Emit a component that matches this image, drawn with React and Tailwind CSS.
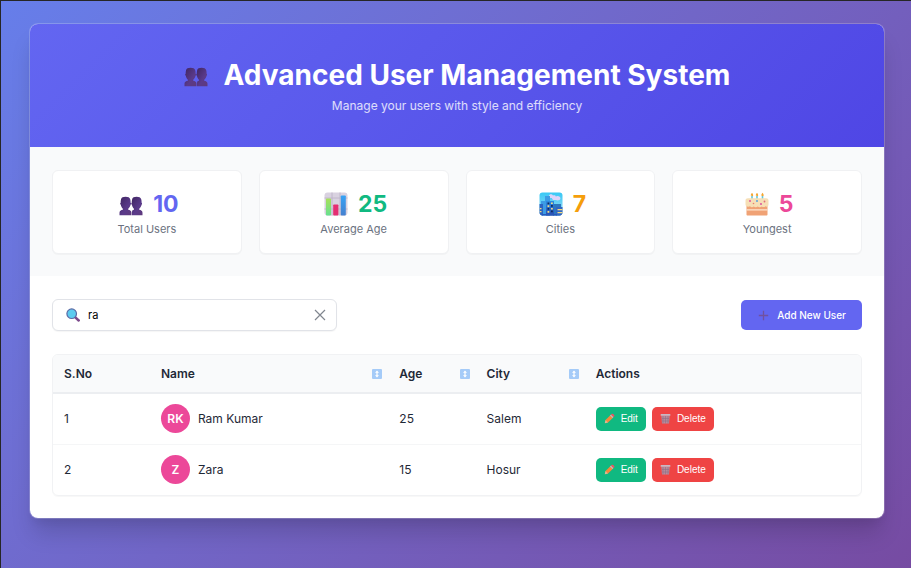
import { useState } from "react";

function PeopleIcon({ className }) {
  return (
    <svg viewBox="0 0 24 20" className={className} aria-hidden="true">
      <defs>
        <linearGradient id="people" x1="0" y1="0" x2="1" y2="1">
          <stop offset="0" stopColor="#3f2560" />
          <stop offset="0.6" stopColor="#5a3a8a" />
          <stop offset="1" stopColor="#5f3a7c" />
        </linearGradient>
      </defs>
      <g fill="url(#people)">
        <path d="M2 3.400C2.400 1.400 4.200.8 6.600.8s4.300.6 4.700 2.800c.3 1.400.3 2 .3 3.200.7.1.6 1.800 0 2-.5 1.800-1.300 3.200-2.400 3.900v1c1.900.4 3.300 1 3.300 3V19.200H.5v-2.500c0-2 1.400-2.600 3.400-3v-1C2.800 11.900 2.200 10.600 1.800 8.800c-.8-.3-.8-1.900-.1-2 0-1.200 0-2 .3-3.400z" />
        <path d="M13.100 3.400C13.500 1.400 15.300.8 17.600.8s4.300.6 4.700 2.800c.3 1.400.3 2 .3 3.200.7.1.6 1.800 0 2-.5 1.800-1.300 3.200-2.400 3.900v1c1.900.4 3.300 1 3.300 3V19.200H13v-2.500c0-2 0-2.600 2-3v-1c-1.100-.8-1.700-2.100-2.100-3.900-.8-.3-.8-1.900-.1-2 0-1.200 0-2 .3-3.400z" />
      </g>
    </svg>
  );
}

function ChartIcon({ className }) {
  return (
    <svg viewBox="0 0 24 24" className={className} aria-hidden="true">
      <defs>
        <linearGradient id="barGreen" x1="0" y1="0" x2="0" y2="1">
          <stop offset="0" stopColor="#a8e05a" />
          <stop offset="1" stopColor="#66e090" />
        </linearGradient>
        <linearGradient id="barBlue" x1="0" y1="0" x2="0" y2="1">
          <stop offset="0" stopColor="#36a3f5" />
          <stop offset="1" stopColor="#4580cf" />
        </linearGradient>
      </defs>
      <rect x="0.500" y="0.500" width="23" height="23" rx="3" fill="#d9d2e0" />
      <path d="M8 .5v23M16 .5v23M.5 6h23M.5 17h23" stroke="#bdb4c8" strokeWidth="0.900" />
      <rect x="2" y="6.500" width="5" height="17" rx="0.800" fill="url(#barGreen)" />
      <rect x="9.200" y="12.500" width="5.200" height="11" rx="0.800" fill="#e52e72" />
      <rect x="16.800" y="3.500" width="5" height="20" rx="0.800" fill="url(#barBlue)" />
    </svg>
  );
}

function CityIcon({ className }) {
  return (
    <svg viewBox="0 0 24 24" className={className} aria-hidden="true">
      <defs>
        <linearGradient id="sky" x1="0" y1="0" x2="0" y2="1">
          <stop offset="0" stopColor="#35c8f5" />
          <stop offset="1" stopColor="#a5dcf5" />
        </linearGradient>
        <linearGradient id="tower" x1="0" y1="0" x2="0" y2="1">
          <stop offset="0" stopColor="#2c8ce0" />
          <stop offset="1" stopColor="#2848ae" />
        </linearGradient>
        <clipPath id="cityClip">
          <rect x="0.500" y="0.500" width="23" height="23" rx="3" />
        </clipPath>
      </defs>
      <g clipPath="url(#cityClip)">
        <path d="M0 0h24v24H0z" fill="url(#sky)" />
        <path d="M10 4c0-2 3-2.500 4-.5 1.500-.5 2.500 0 2.800 1 2-1.500 4.800 0 4.600 2 0 2-3 2.500-5 1.500-2 .5-3.500-.8-3.400-2C11.500 6.300 10 5.500 10 4z" fill="#ddd2fa" />
        <path d="M2 9h4V4h5v20H2z" fill="#3b9be5" />
        <path d="M14 12h8v12h-8z" fill="#2b77bf" />
        <path d="M7 9h8v15H7z" fill="url(#tower)" />
        <path d="M0 12h4v12H0z" fill="#2d64c0" />
        <path d="M17 15h7v9h-7z" fill="#3066c4" />
        <path d="M3 22h15v2H3z" fill="#2858b8" />
        <path d="M8.500 10.500h1.800v1.800H8.500zM8.500 16h1.800v1.800H8.500zM12 13h1.800v1.800H12zM12 18.500h1.800v1.800H12z" fill="#102a5c" />
        <path d="M8.500 13.300h1.800v1.600H8.500zM8.500 19h1.800v1.800H8.500zM12 10.500h1.800v1.600H12zM12 16h1.800v1.600H12zM18.500 17H24v1.300h-5.500zM18.500 20H24v1.300h-5.500zM.5 16h2v1.300h-2zM.5 19h2v1.300h-2z" fill="#f2dc82" />
      </g>
    </svg>
  );
}

function CakeIcon({ className }) {
  return (
    <svg viewBox="0 0 24 24" className={className} aria-hidden="true">
      <path d="M6.200 4h1.600v4H6.200zM11.200 4h1.600v4h-1.600zM16.700 4h1.600v4h-1.600z" fill="#62c8dc" />
      <path d="M7 .8c.9 1.200 1.200 1.800 1.200 2.300 0 .8-.5 1.200-1.200 1.200s-1.200-.4-1.200-1.200C5.800 2.600 6.200 2 7 .8zM12 .8c.9 1.200 1.200 1.800 1.200 2.300 0 .8-.5 1.200-1.200 1.200s-1.200-.4-1.200-1.200c0-.5.4-1.100 1.200-2.300zM17.500 .8c.9 1.200 1.200 1.800 1.200 2.300 0 .8-.5 1.200-1.200 1.200s-1.200-.4-1.200-1.200c0-.5.4-1.100 1.200-2.300z" fill="#f5a52e" />
      <path d="M1.500 12h21v10.500c0 .8-.5 1-1 1h-19c-.5 0-1-.2-1-1z" fill="#f0a275" />
      <path d="M1.500 17.200h21v1.400h-21z" fill="#fde6d0" />
      <path d="M.5 8.500C.5 7 1.500 6.300 3 6.300h18c1.500 0 2.500.7 2.500 2.200v4c0 2.300-2.200 2.600-3 1.700-.8 1-2.800 1.200-3.600.3-1 1-3.300 1-4.200 0-1 1-3 1-4 0-1 1-2.800 1-3.600-.3-1.100.8-4.600.800-4.600-1.700z" fill="#f6dfb6" />
      <circle cx="5" cy="9" r="0.900" fill="#e0489a" />
      <circle cx="8.500" cy="11.500" r="0.800" fill="#e8806a" />
      <circle cx="12" cy="9" r="0.900" fill="#4a9be0" />
      <circle cx="16" cy="12" r="0.900" fill="#d8449a" />
      <circle cx="19.500" cy="9.500" r="0.900" fill="#e06a7a" />
    </svg>
  );
}

function SearchIcon({ className }) {
  return (
    <svg viewBox="0 0 14 14" className={className} aria-hidden="true">
      <path d="M9.300 9.300l3.400 3.200" stroke="#7d4a8c" strokeWidth="2.500" strokeLinecap="round" />
      <circle cx="5.700" cy="5.700" r="4.800" fill="#5ccbef" stroke="#5a6aa5" strokeWidth="1.200" />
    </svg>
  );
}

function SortIcon() {
  return (
    <svg viewBox="0 0 10 10" className="size-[10px] shrink-0" aria-hidden="true">
      <rect width="10" height="10" rx="1" fill="#a5cbf8" />
      <path d="M5 1.500L7 3.700H5.600v2.600H7L5 8.500 3 6.300h1.400V3.700H3z" fill="#fff" />
    </svg>
  );
}

function PencilIcon() {
  return (
    <svg viewBox="0 0 11 11" className="size-[11px]" aria-hidden="true">
      <path d="M.8 10.300l.7-3.200L6.600 1.900l2.600 2.500-5.200 5.200z" fill="#f58a3c" />
      <path d="M1.500 7.100l2.500 2.500-3.200.700z" fill="#d9b89a" />
      <path d="M6 2.600l1-1 2.500 2.500-1 1z" fill="#b9bfc4" />
      <path d="M7 1.600l.8-.8c1-.8 3.300 1.400 2.500 2.500l-.8.800z" fill="#f4525e" />
    </svg>
  );
}

function TrashIcon() {
  return (
    <svg viewBox="0 0 11 11" className="size-[11px]" aria-hidden="true">
      <path d="M1.300 2.500h8.400l-.7 8H2z" fill="#b98b9b" />
      <path d="M3 3v7.500M5.500 3v7.500M8 3v7.500M2 5.500h7M2 8h7" stroke="#8d7186" strokeWidth="0.600" />
      <rect x="0.600" y="1" width="9.800" height="1.800" rx="0.500" fill="#c9b8c4" />
    </svg>
  );
}

const stats = [
  { Icon: PeopleIcon, value: 10, label: "Total Users", color: "text-[#6366f1]", icon: "h-5 w-6 mt-1" },
  { Icon: ChartIcon, value: 25, label: "Average Age", color: "text-[#10b981]", icon: "size-6" },
  { Icon: CityIcon, value: 7, label: "Cities", color: "text-[#f59e0b]", icon: "size-6" },
  { Icon: CakeIcon, value: 5, label: "Youngest", color: "text-[#ec4899]", icon: "size-6" },
];

const users = [
  { initials: "RK", name: "Ram Kumar", age: 25, city: "Salem" },
  { initials: "Z", name: "Zara", age: 15, city: "Hosur" },
];

const columns = [
  { title: "S.No", width: "w-[12%]", sortable: false },
  { title: "Name", width: "w-[29.500%]", sortable: true },
  { title: "Age", width: "w-[10.800%]", sortable: true },
  { title: "City", width: "w-[13.500%]", sortable: true },
  { title: "Actions", width: "", sortable: false },
];

export default function App() {
  const [query, setQuery] = useState("ra");
  return (
    <div className="min-h-screen border-t border-l border-[#262626] bg-linear-135 from-[#667eea] to-[#764ba2] px-[28px] pt-[22px] pb-[49px] pr-[26px] font-['Inter',sans-serif] text-[#1f2937]">
      <main className="overflow-hidden rounded-[9px] border border-white/20 bg-white bg-clip-padding shadow-[0_18px_22px_-4px_rgba(0,0,0,0.15),0_7px_8px_-4px_rgba(0,0,0,0.06)]">
        <header className="bg-linear-135 from-[#6366f1] to-[#4f46e5] px-6 pt-[33px] pb-[33px] text-center text-white">
          <h1 className="flex items-center justify-center gap-4 text-[28px] leading-9 font-bold">
            <PeopleIcon className="mt-1 h-5 w-6" />
            Advanced User Management System
          </h1>
          <p className="mt-1 text-[12px] leading-[17px] text-white/80">Manage your users with style and efficiency</p>
        </header>

        <section className="grid grid-cols-4 gap-[17px] bg-[#f9fafb] px-[22px] pt-[23px] pb-[22px]">
          {stats.map(({ Icon, value, label, color, icon }) => (
            <div key={label} className="rounded-md border border-[#f0f1f3] bg-white px-4 pt-[18px] pb-4 text-center shadow-[0_1px_1px_rgba(0,0,0,0.03)]">
              <div className={`flex items-center justify-center gap-[10px] pl-1 text-[23px] leading-[30px] font-bold ${color}`}>
                <Icon className={icon} />
                {value}
              </div>
              <div className="mt-[2px] text-[11px] leading-4 text-[#6b7280]">{label}</div>
            </div>
          ))}
        </section>

        <section className="px-[22px] pt-[23px] pb-[22px]">
          <div className="flex items-center justify-between">
            <div className="flex h-8 w-[285px] items-center rounded-md border border-[#e1e3e8] bg-white px-[13px] shadow-[0_1px_1px_rgba(0,0,0,0.04)]">
              <SearchIcon className="size-[14px] shrink-0" />
              <input
                aria-label="Search users"
                type="text"
                value={query}
                onChange={(e) => setQuery(e.target.value)}
                className="ml-2 min-w-0 flex-1 text-[11px] text-black outline-none"
              />
              <button type="button" aria-label="Clear search" onClick={() => setQuery("")} className="-mr-[3px]">
                <svg viewBox="0 0 12 12" className="size-3" aria-hidden="true">
                  <path d="M1 1l10 10M11 1L1 11" stroke="#80868f" strokeWidth="1.200" />
                </svg>
              </button>
            </div>
            <button type="button" className="flex h-[30px] items-center gap-2 rounded-[5px] bg-[#6366f1] pr-4 pl-[17px] text-[10px] font-medium text-white">
              <svg viewBox="0 0 11 11" className="size-[11px]" aria-hidden="true">
                <path d="M5.500 .8v9.400M.8 5.500h9.400" stroke="#71519f" strokeWidth="1.300" />
              </svg>
              Add New User
            </button>
          </div>

          <div className="mt-[23px] overflow-hidden rounded-md border border-[#f1f2f4] shadow-[0_1px_1px_rgba(0,0,0,0.03)]">
            <table className="w-full table-fixed border-collapse text-left text-[12px] leading-4">
              <thead className="border-b-2 border-[#eceef1] bg-[#f9fafb]">
                <tr>
                  {columns.map(({ title, width, sortable }) => (
                    <th key={title} scope="col" className={`h-[38px] pr-[6px] pl-[11px] font-semibold ${width}`}>
                      <div className="flex items-center justify-between">
                        {title}
                        {sortable && <SortIcon />}
                      </div>
                    </th>
                  ))}
                </tr>
              </thead>
              <tbody>
                {users.map((user, index) => (
                  <tr key={user.name} className="h-[51px] border-b border-[#f5f6f7] last:border-b-0">
                    <td className="px-[11px]">{index + 1}</td>
                    <td className="px-[11px]">
                      <div className="flex items-center gap-2">
                        <span className="flex size-[29px] items-center justify-center rounded-full bg-[#ec4899] text-[12px] font-semibold text-white">
                          {user.initials}
                        </span>
                        {user.name}
                      </div>
                    </td>
                    <td className="px-[11px]">{user.age}</td>
                    <td className="px-[11px]">{user.city}</td>
                    <td className="px-[11px]">
                      <div className="flex gap-[6px] font-['Liberation_Sans',sans-serif] text-[10px] text-white">
                        <button type="button" className="flex h-6 items-center gap-[6px] rounded-[5px] bg-[#10b981] px-2">
                          <PencilIcon />
                          Edit
                        </button>
                        <button type="button" className="flex h-6 items-center gap-[6px] rounded-[5px] bg-[#ef4444] px-2">
                          <TrashIcon />
                          Delete
                        </button>
                      </div>
                    </td>
                  </tr>
                ))}
              </tbody>
            </table>
          </div>
        </section>
      </main>
    </div>
  );
}
